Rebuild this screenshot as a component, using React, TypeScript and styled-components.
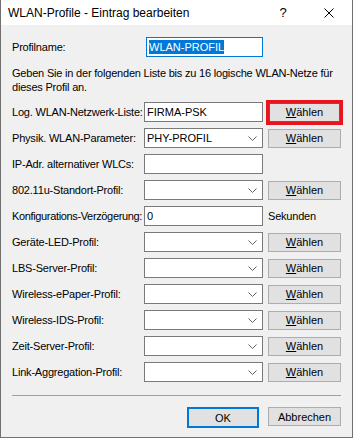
import React from "react";
import styled, { createGlobalStyle } from "styled-components";

const GlobalStyle = createGlobalStyle`
  html, body {
    margin: 0;
    padding: 0;
    background: #f0f0f0;
  }
  * {
    box-sizing: border-box;
  }
`;

const Window = styled.div`
  width: 353px;
  height: 438px;
  background: #f0f0f0;
  border: 1px solid #707070;
  border-top: none;
  font-family: "Liberation Sans", Arial, sans-serif;
  font-size: 11px;
  color: #000;
  display: flex;
  flex-direction: column;
`;

const TitleBar = styled.div`
  height: 25px;
  background: #fff;
  display: flex;
  align-items: center;
  padding-left: 7px;
  font-size: 12px;
`;

const Title = styled.div`
  flex: 1;
  white-space: nowrap;
`;

const TitleButton = styled.div`
  width: 46px;
  height: 25px;
  display: flex;
  align-items: center;
  justify-content: center;
  font-size: 13px;
`;

const Content = styled.div`
  padding: 12px 11px 0 11px;
  display: flex;
  flex-direction: column;
  letter-spacing: -0.2px;
`;

const NameRow = styled.div`
  display: flex;
  align-items: center;
  height: 20px;
`;

const NameLabel = styled.div`
  width: 134px;
`;

const Info = styled.div`
  margin-top: 9px;
  line-height: 14px;
  white-space: nowrap;
`;

const Grid = styled.div`
  margin-top: 8px;
  display: grid;
  grid-template-columns: 132px 119px 78px;
  grid-auto-rows: 20px;
  row-gap: 6px;
  align-items: center;
`;

const Label = styled.div<{ $tight?: boolean }>`
  white-space: nowrap;
  letter-spacing: ${(p) => (p.$tight ? "-0.35px" : "-0.2px")};
`;

const Field = styled.div<{ $focused?: boolean; $width?: number }>`
  position: relative;
  height: 20px;
  width: ${(p) => (p.$width ? `${p.$width}px` : "100%")};
  background: #fff;
  border: 1px solid ${(p) => (p.$focused ? "#0078d7" : "#7a7a7a")};
  display: flex;
  align-items: center;
  padding-left: 2px;
  font-size: 11px;
  letter-spacing: 0;
  white-space: nowrap;
`;

const Selected = styled.span`
  background: #0078d7;
  color: #fff;
  padding: 1px 0;
`;

const Chevron = styled.svg`
  position: absolute;
  right: 5px;
  top: 7px;
`;

const Button = styled.div<{ $focused?: boolean; $width?: number }>`
  width: ${(p) => (p.$width ? `${p.$width}px` : "73px")};
  height: ${(p) => (p.$focused ? "21px" : "19px")};
  justify-self: end;
  background: #e1e1e1;
  border: ${(p) => (p.$focused ? "2px solid #0078d7" : "1px solid #adadad")};
  display: flex;
  align-items: center;
  justify-content: center;
  font-size: 11px;
  letter-spacing: 0;
  position: relative;
`;

const Highlight = styled.div`
  position: absolute;
  left: -4px;
  right: -4px;
  top: -4px;
  bottom: -4px;
  border: 3px solid #e8141e;
  pointer-events: none;
`;

const Unit = styled.div`
  justify-self: end;
  width: 73px;
`;

const Separator = styled.div`
  margin-top: 13px;
  height: 1px;
  background: #a0a0a0;
`;

const Footer = styled.div`
  margin-top: 11px;
  display: flex;
  justify-content: flex-end;
  gap: 9px;
`;

const ChevronIcon = () => (
  <Chevron width="9" height="5" viewBox="0 0 9 5">
    <path d="M0.5 0.5 L4.5 4.5 L8.5 0.5" fill="none" stroke="#606060" strokeWidth="1" />
  </Chevron>
);

const Waehlen = () => (
  <>
    <u>W</u>ählen
  </>
);

type Row = {
  label: string;
  value?: string;
  combo?: boolean;
  button?: boolean;
  unit?: string;
  tight?: boolean;
};

const rows: Row[] = [
  { label: "Physik. WLAN-Parameter:", value: "PHY-PROFIL", combo: true, button: true },
  { label: "IP-Adr. alternativer WLCs:" },
  { label: "802.11u-Standort-Profil:", combo: true, button: true },
  { label: "Konfigurations-Verzögerung:", value: "0", unit: "Sekunden", tight: true },
  { label: "Geräte-LED-Profil:", combo: true, button: true },
  { label: "LBS-Server-Profil:", combo: true, button: true },
  { label: "Wireless-ePaper-Profil:", combo: true, button: true },
  { label: "Wireless-IDS-Profil:", combo: true, button: true },
  { label: "Zeit-Server-Profil:", combo: true, button: true },
  { label: "Link-Aggregation-Profil:", combo: true, button: true },
];

export default function App() {
  return (
    <>
      <GlobalStyle />
      <Window>
        <TitleBar>
          <Title>WLAN-Profile - Eintrag bearbeiten</Title>
          <TitleButton>?</TitleButton>
          <TitleButton>
            <svg width="10" height="10" viewBox="0 0 10 10">
              <path d="M0.5 0.5 L9.5 9.5 M9.5 0.5 L0.5 9.5" stroke="#000" strokeWidth="1" />
            </svg>
          </TitleButton>
        </TitleBar>
        <Content>
          <NameRow>
            <NameLabel>Profilname:</NameLabel>
            <Field $focused $width={117}>
              <Selected>WLAN-PROFIL</Selected>
            </Field>
          </NameRow>
          <Info>
            Geben Sie in der folgenden Liste bis zu 16 logische WLAN-Netze für
            <br />
            dieses Profil an.
          </Info>
          <Grid>
            <Label>Log. WLAN-Netzwerk-Liste:</Label>
            <Field>FIRMA-PSK</Field>
            <Button $focused>
              <Waehlen />
              <Highlight />
            </Button>
            {rows.map((r) => (
              <React.Fragment key={r.label}>
                <Label $tight={r.tight}>{r.label}</Label>
                <Field>
                  {r.value}
                  {r.combo && <ChevronIcon />}
                </Field>
                {r.button ? (
                  <Button>
                    <Waehlen />
                  </Button>
                ) : r.unit ? (
                  <Unit>{r.unit}</Unit>
                ) : (
                  <div />
                )}
              </React.Fragment>
            ))}
          </Grid>
          <Separator />
          <Footer>
            <Button $focused $width={72}>OK</Button>
            <Button>Abbrechen</Button>
          </Footer>
        </Content>
      </Window>
    </>
  );
}
